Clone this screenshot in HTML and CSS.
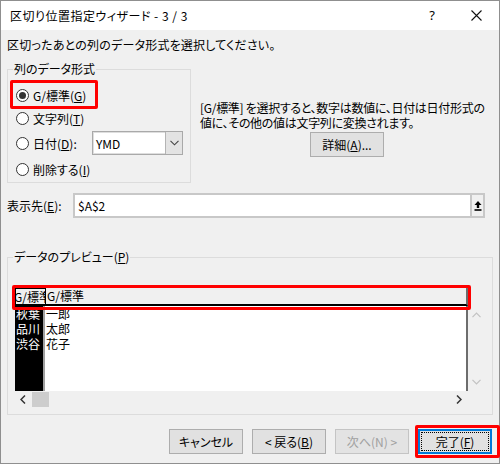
FILE: index.html
```html
<!DOCTYPE html>
<html lang="ja">
<head>
<meta charset="utf-8">
<title>区切り位置指定ウィザード - 3 / 3</title>
<link rel="stylesheet" href="styles.css">
</head>
<body>
<div class="window">
  <div class="titlebar">
    <span class="title">区切り位置指定ウィザード - 3 / 3</span>
    <span class="tb-btn help">?</span>
    <span class="tb-btn close"><svg width="11" height="11" viewBox="0 0 11 11"><path d="M0.5 0.5L10.5 10.5M10.5 0.5L0.5 10.5" stroke="#111" stroke-width="1.1" fill="none"/></svg></span>
  </div>
  <div class="content">
    <p class="intro">区切ったあとの列のデータ形式を選択してください。</p>
    <div class="top">
      <div class="group format">
        <span class="group-label">列のデータ形式</span>
        <div class="radio-row r1"><span class="radio on"></span><span class="rlabel">G/標準(<u>G</u>)</span></div>
        <div class="radio-row r2"><span class="radio"></span><span class="rlabel">文字列(<u>T</u>)</span></div>
        <div class="radio-row r3"><span class="radio"></span><span class="rlabel date-label">日付(<u>D</u>):</span>
          <div class="combo"><span class="combo-text">YMD</span><span class="combo-btn"><svg width="9" height="6" viewBox="0 0 9 6"><path d="M0.5 0.8L4.5 4.8L8.5 0.8" stroke="#444" stroke-width="1.1" fill="none"/></svg></span></div>
        </div>
        <div class="radio-row r4"><span class="radio"></span><span class="rlabel">削除する(<u>I</u>)</span></div>
        <div class="mark mark-radio"></div>
      </div>
      <div class="desc">
        <p class="desc-text">[G/標準] を選択すると、数字は数値に、日付は日付形式の<br>値に、その他の値は文字列に変換されます。</p>
        <button class="btn detail">詳細(<u>A</u>)...</button>
      </div>
    </div>
    <div class="dest">
      <span class="dest-label">表示先(<u>E</u>):</span>
      <div class="refedit">
        <span class="ref-text">$A$2</span>
        <span class="ref-btn"><svg width="8" height="10" viewBox="0 0 8 10"><path d="M4 0L0.5 4H2.8V7H5.2V4H7.5Z" fill="#000"/><rect x="0.5" y="8.2" width="7" height="1.6" fill="#000"/></svg></span>
      </div>
    </div>
    <div class="group preview-group">
      <span class="group-label">データのプレビュー(<u>P</u>)</span>
      <div class="grid">
        <div class="hdr">
          <span class="hcell sel">G/標準</span>
          <span class="hcell">G/標準</span>
        </div>
        <div class="vgap"></div>
        <div class="data">
          <div class="col col1">
            <div class="cell">秋葉</div>
            <div class="cell">品川</div>
            <div class="cell">渋谷</div>
          </div>
          <div class="col col2">
            <div class="cell">一郎</div>
            <div class="cell">太郎</div>
            <div class="cell">花子</div>
          </div>
        </div>
        <div class="vscroll">
          <svg width="9" height="6" viewBox="0 0 9 6"><path d="M0.5 5.2L4.5 1.2L8.5 5.2" stroke="#c2c2c2" stroke-width="1.2" fill="none"/></svg>
          <svg width="9" height="6" viewBox="0 0 9 6"><path d="M0.5 0.8L4.5 4.8L8.5 0.8" stroke="#c2c2c2" stroke-width="1.2" fill="none"/></svg>
        </div>
        <div class="hscroll">
          <span class="harrow"><svg width="6" height="9" viewBox="0 0 6 9"><path d="M5 0.5L1 4.5L5 8.5" stroke="#333" stroke-width="1.5" fill="none"/></svg></span>
          <span class="thumb"></span>
          <span class="harrow right"><svg width="6" height="9" viewBox="0 0 6 9"><path d="M1 0.5L5 4.5L1 8.5" stroke="#333" stroke-width="1.5" fill="none"/></svg></span>
        </div>
        <div class="corner"></div>
      </div>
      <div class="mark mark-header"></div>
    </div>
    <div class="buttons">
      <button class="btn">キャンセル</button>
      <button class="btn">&lt; 戻る(<u>B</u>)</button>
      <button class="btn disabled">次へ(N) &gt;</button>
      <div class="finish-wrap">
        <button class="btn finish">完了(<u>F</u>)</button>
        <div class="mark mark-finish"></div>
      </div>
    </div>
  </div>
</div>
</body>
</html>
```
FILE: styles.css
```css
* { box-sizing: border-box; }
html, body { margin: 0; padding: 0; }
body {
  width: 500px;
  height: 464px;
  overflow: hidden;
  background: #f0f0f0;
  font-family: "Noto Sans CJK JP", "Noto Sans", sans-serif;
  font-size: 12px;
  line-height: 15px;
  color: #000;
  font-feature-settings: "palt";
}
u { text-decoration: underline; text-underline-offset: 1px; }
p { margin: 0; }

.window {
  width: 500px;
  height: 464px;
  border: 1px solid #8f8f8f;
  background: #f0f0f0;
  display: flex;
  flex-direction: column;
}

.titlebar {
  height: 29px;
  flex: none;
  background: #fff;
  display: flex;
  align-items: center;
}
.title { padding-left: 9px; line-height: 16px; letter-spacing: 0.5px; }
.tb-btn {
  height: 29px;
  display: flex;
  align-items: center;
  justify-content: center;
}
.help { margin-left: auto; width: 46px; font-family: "Noto Sans", sans-serif; font-size: 13px; padding-left: 2px; }
.close { width: 45px; }

.content { padding: 0 7px 0 6px; }
.intro { margin-top: 8px; line-height: 14px; height: 14px; white-space: nowrap; letter-spacing: 0.2px; }

.top { display: flex; align-items: flex-start; margin-top: 17px; }

.group {
  position: relative;
  border: 1px solid #dcdcdc;
}
.group-label {
  position: absolute;
  left: 5px;
  top: -8px;
  line-height: 14px;
  padding: 0 1px;
  background: #f0f0f0;
  white-space: nowrap;
}

.format {
  width: 184px;
  height: 114px;
  padding-top: 15px;
  flex: none;
}
.radio-row {
  display: flex;
  align-items: center;
  padding-left: 8px;
  height: 20px;
  white-space: nowrap;
}
.r2 { margin-top: 3px; }
.r3 { margin-top: 3px; height: 24px; }
.r4 { margin-top: 4px; }
.radio {
  width: 13px;
  height: 13px;
  border: 1px solid #333;
  border-radius: 50%;
  background: #fff;
  flex: none;
  display: flex;
  align-items: center;
  justify-content: center;
}
.radio.on::after {
  content: "";
  width: 7px;
  height: 7px;
  border-radius: 50%;
  background: #333;
}
.rlabel { margin-left: 4px; }
.date-label { width: 59px; flex: none; }

.combo {
  width: 91px;
  height: 24px;
  border: 1px solid #a9a9a9;
  box-shadow: inset 0 0 0 1px #dedede;
  background: #fff;
  display: flex;
  align-items: stretch;
}
.combo-text { flex: 1; padding-left: 3px; display: flex; align-items: center; }
.combo-btn {
  width: 17px;
  background: #e3e3e3;
  border-left: 1px solid #b4b4b4;
  display: flex;
  align-items: center;
  justify-content: center;
}

.desc { margin-left: 9px; margin-top: 31px; width: 290px; }
.desc-text { white-space: nowrap; line-height: 15px; letter-spacing: -0.3px; }

.btn {
  font: inherit;
  font-feature-settings: "palt";
  color: #000;
  height: 25px;
  width: 74px;
  padding: 0;
  border: 1px solid #adadad;
  background: #e1e1e1;
  white-space: nowrap;
}
.detail { margin-left: 110px; margin-top: 2px; }

.dest { display: flex; align-items: center; margin-top: 10px; }
.dest-label { width: 66px; flex: none; white-space: nowrap; }
.refedit {
  width: 412px;
  height: 25px;
  border: 2px solid #c8c8c8;
  background: #fff;
  display: flex;
  align-items: stretch;
}
.ref-text { flex: 1; padding-left: 3px; display: flex; align-items: center; }
.ref-btn {
  width: 13px;
  background: #f0f0f0;
  border-left: 2px solid #c8c8c8;
  display: flex;
  align-items: center;
  justify-content: center;
}

.preview-group {
  margin-top: 39px;
  width: 486px;
  height: 158px;
  padding: 29px 0 0 7px;
}
.grid {
  width: 470px;
  height: 121px;
  display: grid;
  grid-template-columns: 453px 17px;
  grid-template-rows: 19px 85px 17px;
}
.hdr {
  display: flex;
  background: #f0f0f0;
  border-top: 1px solid #6d6d6d;
  border-bottom: 2px solid #000;
  border-right: 2px solid #6d6d6d;
  line-height: 16px;
}
.hcell { white-space: nowrap; overflow: hidden; }
.hcell.sel {
  width: 31px;
  flex: none;
  border: 1px solid #000;
  border-bottom: none;
  text-indent: -2px;
}
.hcell + .hcell { padding-left: 1px; }
.data {
  display: flex;
  background: #fff;
  border-right: 2px solid #6d6d6d;
}
.col1 {
  width: 30px;
  flex: none;
  background: #000;
  color: #fff;
  border-right: 2px solid #a0a0a0;
  padding-left: 1px;
  overflow: hidden;
}
.col2 { padding-left: 1px; }
.cell { height: 15px; line-height: 15px; white-space: nowrap; }
.vscroll {
  display: flex;
  flex-direction: column;
  align-items: center;
  justify-content: space-between;
  padding: 6px 0 6px;
}
.hscroll {
  display: flex;
  align-items: center;
}
.harrow {
  width: 16px;
  height: 17px;
  display: flex;
  align-items: center;
  justify-content: center;
}
.harrow.right { margin-left: auto; margin-right: 1px; }
.thumb {
  width: 17px;
  height: 15px;
  background: #cdcdcd;
  margin-left: 1px;
}

.mark {
  position: absolute;
  border: 3px solid #f00;
  border-radius: 2px;
  pointer-events: none;
}
.mark-radio { left: 2px; top: 10px; width: 88px; height: 29px; }
.mark-header { left: 4px; top: 27px; width: 459px; height: 25px; }

.buttons {
  display: flex;
  justify-content: flex-end;
  gap: 9px;
  margin-top: 14px;
}
.disabled { color: #a0a0a0; background: #e3e3e3; border-color: #c4c4c4; }
.finish-wrap { position: relative; }
.finish {
  border: 2px solid #0078d7;
  outline: 1px dotted #000;
  outline-offset: -4px;
}
.mark-finish { left: -3px; top: -4px; width: 85px; height: 33px; }
```
